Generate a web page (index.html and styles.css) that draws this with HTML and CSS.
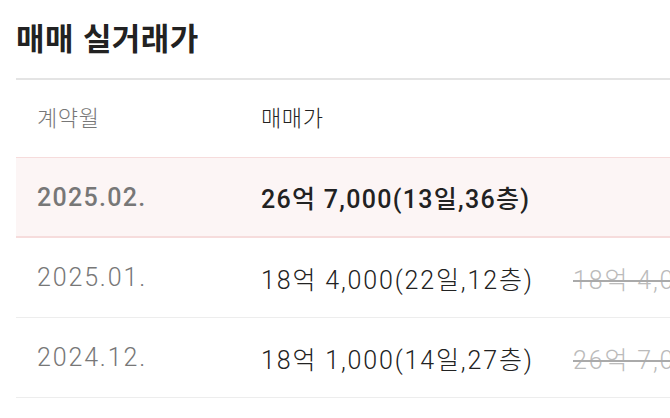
FILE: index.html
```html
<!DOCTYPE html>
<html lang="ko">
<head>
<meta charset="utf-8">
<link rel="stylesheet" href="styles.css">
</head>
<body>
<div class="page">
  <h1 class="title">매매 실거래가</h1>
  <div class="table">
    <div class="row head">
      <div class="cell date">계약월</div>
      <div class="cell price">매매가</div>
      <div class="cell prev"></div>
    </div>
    <div class="row hl">
      <div class="cell date">2025.02.</div>
      <div class="cell price">26억 7,000(13일,36층)</div>
      <div class="cell prev"></div>
    </div>
    <div class="row">
      <div class="cell date">2025.01.</div>
      <div class="cell price">18억 4,000(22일,12층)</div>
      <div class="cell prev"><s>18억 4,000</s></div>
    </div>
    <div class="row">
      <div class="cell date">2024.12.</div>
      <div class="cell price">18억 1,000(14일,27층)</div>
      <div class="cell prev"><s>26억 7,000</s></div>
    </div>
  </div>
</div>
</body>
</html>
```
FILE: styles.css
```css
html, body {
  margin: 0;
  padding: 0;
  background: #fff;
  overflow: hidden;
}
body {
  font-family: "Noto Sans CJK KR", "Noto Sans", sans-serif;
  color: #222;
}
.page {
  padding: 0 0 0 16px;
  width: 900px;
}
.title {
  margin: 0;
  font-size: 31px;
  font-weight: 700;
  line-height: 74px;
  height: 78px;
  letter-spacing: 0.4px;
  color: #222;
}
.table {
  border-top: 2px solid #e4e4e4;
}
.row {
  display: grid;
  grid-template-columns: 224px 312px auto;
  align-items: center;
  padding-left: 21px;
  height: 79px;
  border-bottom: 1px solid #ededed;
  font-family: Roboto, "Noto Sans CJK KR", sans-serif;
  font-size: 25px;
  font-weight: 300;
  letter-spacing: 1.85px;
  white-space: nowrap;
}
.row.head {
  height: 78px;
  padding-bottom: 6px;
  box-sizing: border-box;
  font-family: "Noto Sans CJK KR", sans-serif;
  font-size: 22px;
  letter-spacing: 0.6px;
  color: #777;
  border-bottom: 1px solid #f6dcdc;
}
.row.hl {
  background: #fcf5f5;
  border-bottom: 2px solid #f6dcdc;
  height: 78px;
  letter-spacing: 1.3px;
}
.row.hl .date {
  color: #777;
  font-weight: 500;
}
.row.hl .price {
  font-weight: 500;
  color: #222;
}
.date {
  color: #777;
}
.price {
  color: #222;
}
.prev {
  color: #bbb;
  overflow: hidden;
}
.prev s {
  text-decoration-thickness: 2px;
  text-decoration-color: #aaa;
}
```
